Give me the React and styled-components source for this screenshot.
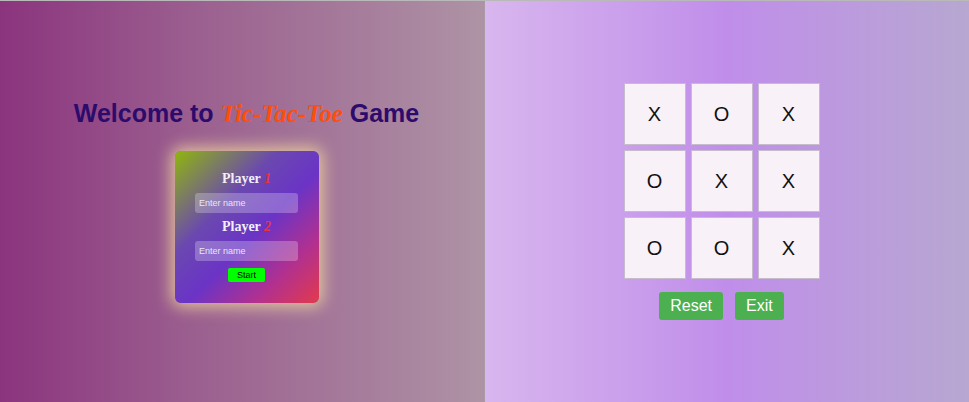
import React, { useState } from 'react'
import styled, { createGlobalStyle } from 'styled-components'

const GlobalStyle = createGlobalStyle`
  html, body {
    margin: 0;
    padding: 0;
    height: 100%;
  }
  body {
    font-family: 'Liberation Sans', Arial, sans-serif;
    border-top: 1px solid #b9b9b9;
    box-sizing: border-box;
  }
  #root {
    height: 100%;
  }
`

const Page = styled.main`
  display: flex;
  height: 100%;
`

const Welcome = styled.section`
  flex: 0 0 485px;
  box-sizing: border-box;
  display: flex;
  flex-direction: column;
  align-items: center;
  padding: 97px 0 0 9px;
  background: linear-gradient(to right, #8b347e 0%, #9b5f8f 40%, #ae93a5 100%);
  border-right: 1px solid #a89aa8;
`

const Title = styled.h1`
  margin: 0;
  font-size: 25px;
  line-height: 30px;
  font-weight: bold;
  color: #2c0b6c;
`

const Brand = styled.span`
  font-family: 'Liberation Serif', 'Times New Roman', serif;
  font-style: italic;
  color: #ff4d0a;
`

const Card = styled.form`
  margin-top: 22px;
  width: 144px;
  box-sizing: border-box;
  padding: 20px 20px 21px;
  display: flex;
  flex-direction: column;
  align-items: center;
  border-radius: 6px;
  background: linear-gradient(135deg, #8fb70c 0%, #6a48b0 35%, #6a34c6 55%, #b2308f 78%, #e23a4c 100%);
  box-shadow: 0 0 16px 4px rgba(248, 226, 160, 0.75);
`

const Label = styled.div`
  font-family: 'Liberation Serif', 'Times New Roman', serif;
  font-weight: bold;
  font-size: 14px;
  line-height: 16px;
  color: #f4eef8;
  margin-top: ${(p) => p.$top || 0}px;
`

const Num = styled.i`
  color: #e8353c;
`

const NameInput = styled.input`
  margin-top: 6px;
  width: 103px;
  height: 20px;
  box-sizing: border-box;
  border: none;
  outline: none;
  border-radius: 3px;
  padding: 0 4px;
  background: rgba(255, 255, 255, 0.25);
  font-family: 'Liberation Sans', Arial, sans-serif;
  font-size: 9px;
  color: #fff;
  &::placeholder {
    color: #ece4f2;
  }
`

const StartButton = styled.button`
  margin-top: 7px;
  width: 37px;
  height: 14px;
  padding: 0;
  border: none;
  border-radius: 2px;
  background: #00ff00;
  color: #000;
  font-family: 'Liberation Sans', Arial, sans-serif;
  font-size: 9px;
  cursor: pointer;
`

const Arena = styled.section`
  flex: 1;
  display: flex;
  flex-direction: column;
  align-items: center;
  justify-content: center;
  padding-right: 11px;
  background: linear-gradient(to right, #d8b6ee 0%, #c08eea 50%, #b7a7d1 100%);
`

const Board = styled.div`
  display: grid;
  grid-template-columns: repeat(3, 62px);
  grid-auto-rows: 62px;
  gap: 5px;
`

const Cell = styled.button`
  display: flex;
  align-items: center;
  justify-content: center;
  padding: 0;
  background: #f9f1f8;
  border: 1px solid #c7bccb;
  font-family: 'Liberation Sans', Arial, sans-serif;
  font-size: 20px;
  color: #111;
  cursor: pointer;
`

const Controls = styled.div`
  display: flex;
  gap: 12px;
  margin-top: 13px;
`

const ActionButton = styled.button`
  height: 28px;
  padding: 0 11px;
  border: none;
  border-radius: 3px;
  background: #4caf50;
  color: #fff;
  font-family: 'Liberation Sans', Arial, sans-serif;
  font-size: 16px;
  cursor: pointer;
`

const initial = ['X', 'O', 'X', 'O', 'X', 'X', 'O', 'O', 'X']

const App = () => {
  const [cells, setCells] = useState(initial)

  return (
    <>
      <GlobalStyle />
      <Page>
        <Welcome>
          <Title>
            Welcome to <Brand>Tic-Tac-Toe</Brand> Game
          </Title>
          <Card onSubmit={(e) => e.preventDefault()}>
            <Label>
              Player <Num>1</Num>
            </Label>
            <NameInput placeholder='Enter name' />
            <Label $top={6}>
              Player <Num>2</Num>
            </Label>
            <NameInput placeholder='Enter name' />
            <StartButton type='submit'>Start</StartButton>
          </Card>
        </Welcome>
        <Arena>
          <Board>
            {cells.map((c, i) => (
              <Cell key={i}>{c}</Cell>
            ))}
          </Board>
          <Controls>
            <ActionButton onClick={() => setCells(Array(9).fill(''))}>Reset</ActionButton>
            <ActionButton>Exit</ActionButton>
          </Controls>
        </Arena>
      </Page>
    </>
  )
}

export default App
